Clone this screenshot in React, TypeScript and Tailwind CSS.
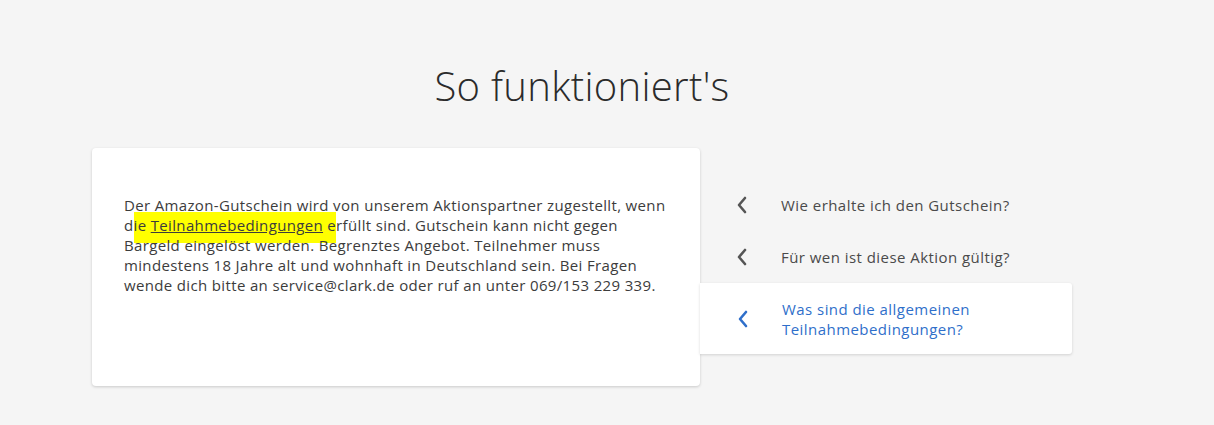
import React from 'react';

const faqs = [
  { q: 'Wie erhalte ich den Gutschein?', active: false },
  { q: 'Für wen ist diese Aktion gültig?', active: false },
  { q: 'Was sind die allgemeinen Teilnahmebedingungen?', active: true },
];

function Chevron({ active }: { active: boolean }) {
  return (
    <svg width="14" height="20" viewBox="0 0 14 20" fill="none" className="shrink-0">
      <path
        d="M10 3 L4 10 L10 17"
        stroke={active ? '#2f6fca' : '#555555'}
        strokeWidth="2.6"
        strokeLinecap="round"
        strokeLinejoin="round"
      />
    </svg>
  );
}

export default function App() {
  return (
    <div className="min-h-[425px] w-full bg-[#f5f5f5] pl-[92px] font-['Open_Sans',sans-serif]">
      <div className="w-[980px]">
        <h1 className="pt-[62px] text-center text-[40px] font-light leading-[48px] tracking-[0.3px] text-[#2b2b2b]">
          So funktioniert's
        </h1>

        <div className="mt-[38px] flex items-start">
          <div className="h-[238px] w-[608px] rounded-[4px] bg-white px-[32px] pt-[47px] shadow-[0_1px_3px_rgba(0,0,0,0.18)]">
            <p className="text-[15px] leading-[20px] tracking-[0.35px] text-[#3c3c3c]">
              Der Amazon-Gutschein wird von unserem Aktionspartner zugestellt, wenn
              <br />d
              <span className="bg-[#ffff00] pt-[3px] pb-[8px]">
                ie <a className="underline">Teilnahmebedingungen</a> e
              </span>
              rfüllt sind. Gutschein kann nicht gegen
              <br />
              Bargeld eingelöst werden. Begrenztes Angebot. Teilnehmer muss
              <br />
              mindestens 18 Jahre alt und wohnhaft in Deutschland sein. Bei Fragen
              <br />
              wende dich bitte an service@clark.de oder ruf an unter 069/153 229 339.
            </p>
          </div>

          <div className="mt-[31px] flex w-[372px] flex-col">
            {faqs.map((f) => (
              <div
                key={f.q}
                className={
                  f.active
                    ? 'flex h-[71px] items-center gap-[32px] rounded-r-[3px] bg-white pl-[36px] pr-[20px] shadow-[0_1px_3px_rgba(0,0,0,0.15)]'
                    : 'flex h-[52px] items-center gap-[32px] pl-[35px] pr-[20px]'
                }
              >
                <Chevron active={f.active} />
                <span
                  className={
                    f.active
                      ? 'w-[220px] text-[15px] leading-[20px] tracking-[0.45px] text-[#2f6fca]'
                      : 'text-[15px] leading-[20px] tracking-[0.45px] text-[#4a4a4a]'
                  }
                >
                  {f.q}
                </span>
              </div>
            ))}
          </div>
        </div>
      </div>
    </div>
  );
}
